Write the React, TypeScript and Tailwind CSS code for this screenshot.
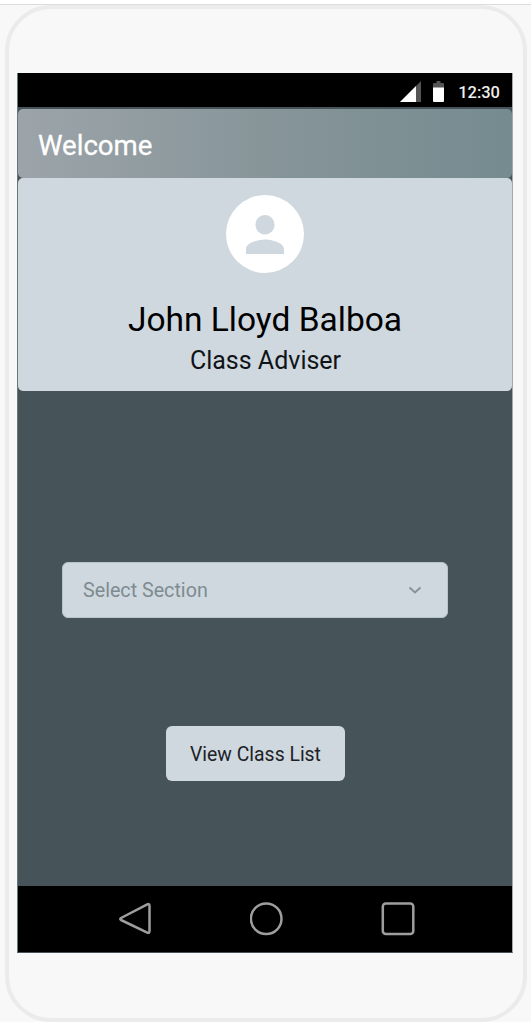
function StatusBar() {
  return (
    <div className="flex h-[34px] shrink-0 items-center justify-end bg-black pt-[2px] pr-[12px]">
      <svg className="mr-[12px]" width="21" height="21" viewBox="0 0 21 21">
        <path d="M21 0V21H0Z" fill="#555555" />
        <path d="M16 5V21H0Z" fill="#ffffff" />
      </svg>
      <svg className="mr-[14px]" width="11" height="21" viewBox="0 0 11 21">
        <path d="M3.500 0h4v2H10q1 0 1 1v4H0V3q0-1 1-1h2.500z" fill="#555555" />
        <path d="M0 6.500h11V20q0 1-1 1H1q-1 0-1-1z" fill="#ffffff" />
      </svg>
      <span className="mt-[4px] text-[16.500px] leading-5 font-medium text-[#eeeeee]">12:30</span>
    </div>
  );
}

function ProfileCard() {
  return (
    <section className="flex h-[213px] shrink-0 flex-col items-center rounded-[5px] bg-[#cfd8de] pt-[17px] text-black">
      <div className="flex size-[78px] items-center justify-center rounded-full bg-white">
        <svg width="38" height="39" viewBox="4 4 16 16" preserveAspectRatio="none">
          <path
            d="M12 12c2.210 0 4-1.790 4-4s-1.790-4-4-4-4 1.790-4 4 1.790 4 4 4zm0 2c-2.670 0-8 1.340-8 4v2h16v-2c0-2.660-5.330-4-8-4z"
            fill="#cfd8de"
          />
        </svg>
      </div>
      <h2 className="mt-[27px] text-[33.500px] leading-10 whitespace-nowrap">John Lloyd Balboa</h2>
      <p className="mt-[6px] pl-px text-[25px] leading-[30px] whitespace-nowrap text-[#101418]">Class Adviser</p>
    </section>
  );
}

function NavBar() {
  return (
    <nav className="mt-auto flex h-[66px] shrink-0 items-center justify-between bg-black pr-[97px] pl-[100px]">
      <svg width="34" height="34" viewBox="0 0 34 34" fill="none" stroke="#9e9e9e" strokeWidth="2.500" strokeLinejoin="round">
        <path d="M3 16 29.300 2.300Q31.500 1.500 31.500 4V29Q31.500 31.500 29.300 30.700L3 18Q1.500 17 3 16Z" />
      </svg>
      <svg width="34" height="34" viewBox="0 0 34 34" fill="none" stroke="#9e9e9e" strokeWidth="2.500">
        <circle cx="16.200" cy="16.700" r="15.300" />
      </svg>
      <svg width="34" height="34" viewBox="0 0 34 34" fill="none" stroke="#9e9e9e" strokeWidth="2.500">
        <rect x="1.800" y="1.500" width="30.500" height="30.500" rx="3" />
      </svg>
    </nav>
  );
}

export default function App() {
  return (
    <div className="flex h-[1022px] w-[531px] flex-col overflow-hidden bg-[#f8f8f8] font-['Roboto',sans-serif]">
      <div className="h-[5px] shrink-0 border-b border-[#dddddd] bg-white" />
      <div className="ml-[5px] h-[1017px] w-[522px] rounded-[46px] border-4 border-[#ebebeb] pt-[64px] pl-[8px]">
        <main className="flex h-[880px] w-[496px] flex-col border-r border-b border-l border-r-[#a2a9ac] border-b-[#455257] border-l-[#69767b] bg-[#465358]">
          <StatusBar />
          <header className="mt-[2px] flex h-[69px] shrink-0 items-center rounded-[5px] bg-linear-to-r from-[#9ca4a9] via-[#879599] to-[#758b90] pl-[20px]">
            <h1 className="mt-[5px] text-[27.600px] leading-8 text-white [-webkit-text-stroke:0.3px_white]">Welcome</h1>
          </header>
          <ProfileCard />
          <div className="mt-[171px] ml-[44px] flex h-[56px] w-[386px] shrink-0 items-center justify-between rounded-md border border-[#b9c4ca] bg-[#cfd8df] pr-[25px] pl-[20px]">
            <span className="pt-[2px] text-[19.700px] text-[#7e8b90]">Select Section</span>
            <svg width="14" height="9" viewBox="0 0 14 9" fill="none" stroke="#87939a" strokeWidth="2">
              <path d="m1.500 1.500 5.500 5 5.500-5" />
            </svg>
          </div>
          <button className="mt-[108px] ml-[148px] flex h-[55px] w-[179px] shrink-0 items-center justify-center rounded-md bg-[#cfd8df] pt-[2px] text-[19.400px] whitespace-nowrap text-[#1c2226]">
            View Class List
          </button>
          <NavBar />
        </main>
      </div>
    </div>
  );
}
